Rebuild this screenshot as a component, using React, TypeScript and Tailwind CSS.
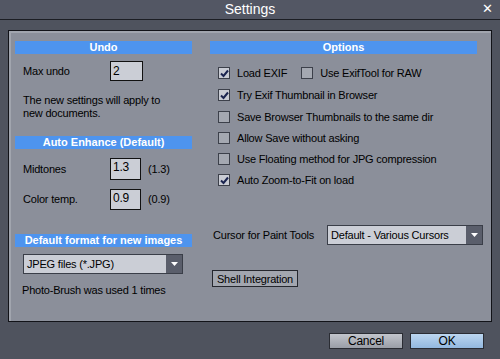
import React from "react"

const font = { fontFamily: '"Liberation Sans", Arial, sans-serif' }

function Header({ title }: { title: string }) {
  return (
    <div className="h-[13px] bg-[#4e94ee] text-white text-[11px] font-bold leading-[13px] text-center tracking-normal">
      {title}
    </div>
  )
}

function Check({ checked }: { checked?: boolean }) {
  return (
    <span
      className={`w-[12px] h-[12px] border border-[#3c404a] flex items-center justify-center shrink-0 ${
        checked ? "bg-[#c9ccd4]" : "bg-[#a4a8b1]"
      }`}
    >
      {checked && (
        <svg width="9" height="9" viewBox="0 0 9 9">
          <path d="M1 4.5 L3.5 7 L8 1.5" stroke="#1b2550" strokeWidth="2" fill="none" />
        </svg>
      )}
    </span>
  )
}

function Select({ value, w }: { value: string; w: string }) {
  return (
    <div className={`${w} h-[20px] shrink-0 bg-[#cbced6] border border-[#3a3e48] flex items-center`}>
      <span className="flex-1 pl-[3px] text-[11px] text-black whitespace-nowrap">{value}</span>
      <span className="w-[16px] h-[18px] bg-[#5a5e6b] flex items-center justify-center">
        <svg width="7" height="4" viewBox="0 0 7 4">
          <path d="M0 0 H7 L3.5 4 Z" fill="#ffffff" />
        </svg>
      </span>
    </div>
  )
}

const options = [
  { label: "Try Exif Thumbnail in Browser", checked: true },
  { label: "Save Browser Thumbnails to the same dir", checked: false },
  { label: "Allow Save without asking", checked: false },
  { label: "Use Floating method for JPG compression", checked: false },
  { label: "Auto Zoom-to-Fit on load", checked: true },
]

export default function App() {
  return (
    <div
      className="w-[500px] h-[359px] bg-[#4f535e] flex flex-col text-[11px] tracking-[-0.2px] text-black whitespace-nowrap"
      style={font}
    >
      {/* Title bar */}
      <div className="h-[20px] bg-[#535764] border-b border-[#1c1e24] flex items-center relative">
        <span className="flex-1 text-center text-white text-[14px] leading-[19px] tracking-normal">Settings</span>
        <span className="absolute right-[7px] top-[2px] text-white text-[13px] leading-[14px]">✕</span>
      </div>

      {/* Panel */}
      <div className="ml-[8px] mt-[10px] w-[484px] h-[292px] border border-[#121318] bg-[#8b8f9a] shadow-[inset_2px_2px_0_#a1a5ae] flex">
        {/* Left column */}
        <div className="ml-[6px] mt-[10px] w-[177px] shrink-0 flex flex-col">
          <Header title="Undo" />
          <div className="flex items-center mt-[7px] h-[20px]">
            <span className="pl-[8px] w-[95px]">Max undo</span>
            <span className="w-[33px] h-[20px] bg-[#cbced6] border border-[#111] pl-[2px] text-[12px] leading-[18px]">2</span>
          </div>
          <p className="pl-[8px] mt-[13px] leading-[13px]">
            The new settings will apply to
            <br />
            new documents.
          </p>
          <div className="mt-[16px]">
            <Header title="Auto Enhance (Default)" />
          </div>
          <div className="flex items-center mt-[9px] h-[22px]">
            <span className="pl-[8px] w-[95px]">Midtones</span>
            <span className="w-[31px] h-[22px] bg-[#cbced6] border border-[#111] pl-[2px] text-[12px] leading-[16px]">1.3</span>
            <span className="ml-[7px]">(1.3)</span>
          </div>
          <div className="flex items-center mt-[9px] h-[21px]">
            <span className="pl-[8px] w-[95px]">Color temp.</span>
            <span className="w-[31px] h-[21px] bg-[#cbced6] border border-[#111] pl-[2px] text-[12px] leading-[16px]">0.9</span>
            <span className="ml-[7px]">(0.9)</span>
          </div>
          <div className="mt-[24px]">
            <Header title="Default format for new images" />
          </div>
          <div className="mt-[7px] ml-[8px]">
            <Select value="JPEG files (*.JPG)" w="w-[160px]" />
          </div>
          <p className="pl-[7px] mt-[8px]">Photo-Brush was used 1 times</p>
        </div>

        {/* Right column */}
        <div className="ml-[18px] mt-[10px] w-[267px] shrink-0 flex flex-col">
          <Header title="Options" />
          <div className="flex items-center mt-[12px] h-[14px] pl-[8px]">
            <Check checked />
            <span className="ml-[7px]">Load EXIF</span>
            <span className="ml-[14px]">
              <Check />
            </span>
            <span className="ml-[7px]">Use ExifTool for RAW</span>
          </div>
          {options.map((o, i) => (
            <div key={o.label} className={`flex items-center h-[14px] pl-[8px] ${i < 2 ? "mt-[8px]" : "mt-[7px]"}`}>
              <Check checked={o.checked} />
              <span className="ml-[7px]">{o.label}</span>
            </div>
          ))}
          <div className="flex items-center mt-[38px] pl-[3px]">
            <span className="w-[114px] shrink-0">Cursor for Paint Tools</span>
            <Select value="Default - Various Cursors" w="w-[156px]" />
          </div>
          <div className="mt-[25px] pl-[2px]">
            <button className="h-[17px] w-[86px] bg-[#a2a6af] border border-[#25272e] text-[11px] leading-[14px] tracking-[-0.2px]">
              Shell Integration
            </button>
          </div>
        </div>
      </div>

      {/* Footer buttons */}
      <div className="flex justify-end gap-[7px] mr-[16px] mt-[11px]">
        <button className="w-[74px] h-[16px] bg-gradient-to-b from-[#c2c5cc] to-[#9a9ea7] border border-[#2a2c33] text-[12px] leading-[14px]">
          Cancel
        </button>
        <button className="w-[74px] h-[16px] bg-gradient-to-b from-[#bcd6f0] to-[#93b8df] border border-[#2a2c33] text-[12px] leading-[14px]">
          OK
        </button>
      </div>
    </div>
  )
}
